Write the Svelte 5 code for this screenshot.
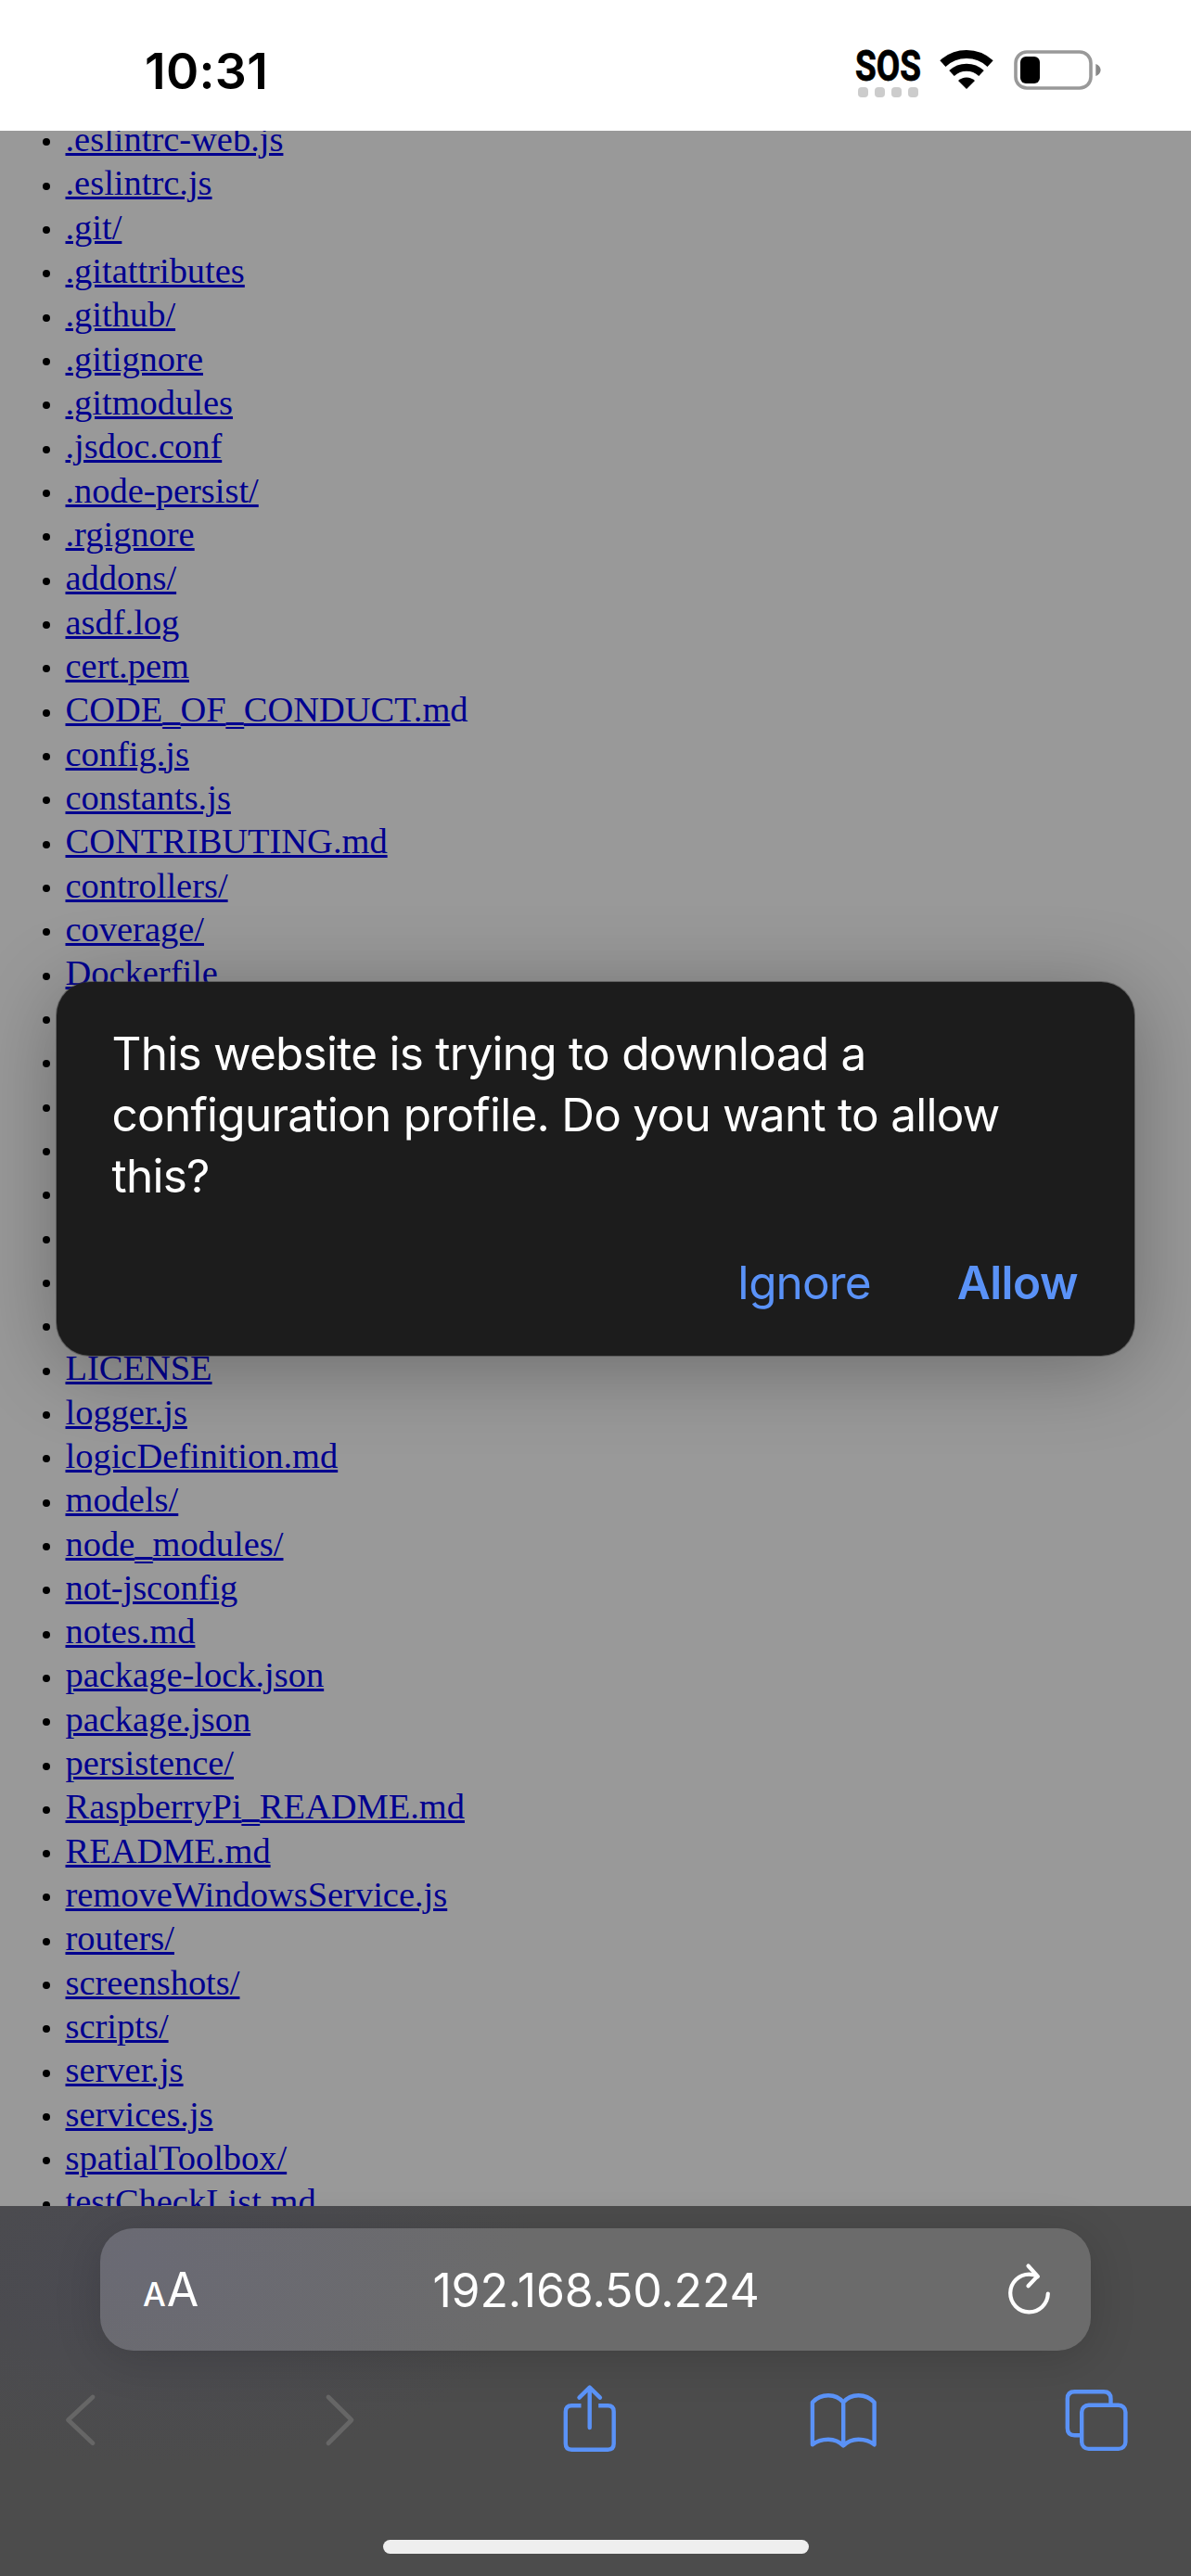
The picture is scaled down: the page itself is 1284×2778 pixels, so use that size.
<script>
  const files = [
    '.eslintrc-web.js', '.eslintrc.js', '.git/', '.gitattributes', '.github/', '.gitignore',
    '.gitmodules', '.jsdoc.conf', '.node-persist/', '.rgignore', 'addons/', 'asdf.log',
    'cert.pem', 'CODE_OF_CONDUCT.md', 'config.js', 'constants.js', 'CONTRIBUTING.md',
    'controllers/', 'coverage/', 'Dockerfile',
    // entries hidden behind the dialog
    '', '', '', '', '', '', '', '',
    'LICENSE', 'logger.js', 'logicDefinition.md', 'models/', 'node_modules/', 'not-jsconfig',
    'notes.md', 'package-lock.json', 'package.json', 'persistence/', 'RaspberryPi_README.md',
    'README.md', 'removeWindowsService.js', 'routers/', 'screenshots/', 'scripts/',
    'server.js', 'services.js', 'spatialToolbox/', 'testCheckList.md'
  ];
</script>

<div class="phone">
  <header class="status">
    <span class="time">10:31</span>
    <div class="indicators">
      <div class="carrier">
        <svg class="sos" viewBox="0 0 70 36"><text x="-1" y="34.5" textLength="71" lengthAdjust="spacingAndGlyphs">SOS</text></svg>
        <div class="dots"><i></i><i></i><i></i><i></i></div>
      </div>
      <svg class="wifi" viewBox="-30 -43 60 44">
        <path d="M-25.6 -27.4A37.5 37.5 0 0 1 25.6 -27.4" stroke-width="9" />
        <path d="M-16 -17A23.4 23.4 0 0 1 16 -17" stroke-width="8" />
        <path class="solid" d="M0 0L-9 -9A13 13 0 0 1 9 -9Z" />
      </svg>
      <svg class="battery" viewBox="0 0 96 44">
        <rect x="2" y="2" width="81" height="39" rx="12" fill="none" stroke="#999" stroke-width="3.6" />
        <rect x="7" y="7" width="21" height="29" rx="6" fill="#000" />
        <path d="M88.300 15C91.500 16 93.600 18.600 93.600 21.500S91.500 27 88.300 28Z" fill="#888" />
      </svg>
    </div>
  </header>

  <main class="page">
    <ul>
      {#each files as name}
        <li>
          {#if name === 'CODE_OF_CONDUCT.md'}
            <a href="#file">CODE<span class="low">_</span>OF<span class="low">_</span>CONDUCT.m<span class="tail">d</span></a>
          {:else if name}
            <a href="#file">{#each name.split('_') as part, i}{#if i}<span class="low">_</span>{/if}{part}{/each}</a>
          {/if}
        </li>
      {/each}
    </ul>
  </main>

  <footer class="toolbar">
    <div class="address">
      <span class="aa"><small>A</small><b>A</b></span>
      <span class="url">192.168.50.224</span>
      <svg class="reload" viewBox="0 0 50 58">
        <path d="M33.800 15.200C31 13.400 28 12.700 24.500 12.700A20.300 20.300 0 1 0 44.800 33.500" />
        <path d="M23.500 3.500L33.600 14.600L23.500 25.200" />
      </svg>
    </div>
    <nav>
      <svg class="off" viewBox="0 0 72 80"><path d="M49 15L22.500 39.800L49 64.700" /></svg>
      <svg class="off" viewBox="0 0 72 80"><path d="M30 15L55 39.800L30 64.700" /></svg>
      <svg viewBox="0 0 72 80">
        <path class="butt" d="M28.500 24.300H18.200Q11.800 24.300 11.800 30.700V65.300Q11.800 71.700 18.200 71.700H57.300Q63.700 71.700 63.700 65.300V30.700Q63.700 24.300 57.300 24.300H47.200" />
        <path d="M37.700 48V5.500M26.500 15.600L37.700 4.600L48.900 15.600" />
      </svg>
      <svg viewBox="0 0 72 80">
        <path d="M37.200 20.700C33 15.500 27.500 13.200 21 13.200C14 13.200 8.500 15.700 3.900 20.700V66.300C8.500 62.500 14 60.700 21 60.700C27.500 60.700 33 63 37.200 67.500C41.400 63 47 60.700 53.500 60.700C60.500 60.700 66 62.500 70.600 66.300V20.700C66 15.700 60.500 13.200 53.500 13.200C47 13.200 41.400 15.500 37.200 20.700V67" />
      </svg>
      <svg viewBox="0 0 72 80">
        <path class="butt" d="M20 56.200H12.500Q4.800 56.200 4.800 48.500V16.900Q4.800 9.200 12.500 9.200H43.800Q51.500 9.200 51.500 16.900V23" />
        <rect x="20.200" y="23.700" width="47.200" height="47.200" rx="7.500" />
      </svg>
    </nav>
    <div class="home"></div>
  </footer>

  <div class="dialog">
    <p>
      <span>This website is trying to download a</span>
      <span>configuration profile. Do you want to allow</span>
      <span>this?</span>
    </p>
    <div class="actions">
      <button class="ignore">Ignore</button>
      <button class="allow">Allow</button>
    </div>
  </div>
</div>

<style>
  :global(body) { margin: 0; background: #4c4c4c; }
  .phone {
    position: relative; width: 1284px; height: 2778px; overflow: hidden;
    display: flex; flex-direction: column; background: #999;
    font-family: Inter, 'Liberation Sans', sans-serif;
  }
  svg { display: block; overflow: visible; flex: none; }

  .status {
    height: 141px; flex: none; box-sizing: border-box; background: #fff; color: #000;
    display: flex; justify-content: space-between; align-items: flex-start;
    padding: 0 95px 0 156px;
  }
  .time { font-size: 53.5px; font-weight: 600; line-height: 64px; margin-top: 45px; letter-spacing: .3px; }
  .indicators { display: flex; align-items: flex-start; padding-top: 52px; }
  .carrier { width: 70px; }
  .sos { width: 70px; height: 36px; }
  .sos text { font: 700 47px Roboto, sans-serif; stroke: #000; stroke-width: .8px; }
  .dots { display: flex; gap: 7px; padding: 6px 0 0 2px; }
  .dots i { width: 11px; height: 11px; border-radius: 4px; background: #ccc; }
  .wifi { width: 60px; height: 44px; margin: 1px 0 0 19px; fill: none; stroke: #000; }
  .wifi .solid { fill: #000; stroke: none; }
  .battery { width: 96px; height: 44px; margin: 2px 0 0 21px; }

  .page { height: 2238px; flex: none; overflow: hidden; }
  ul { list-style: none; margin: -14px 0 0; padding: 0 0 0 45.500px; }
  li {
    display: flex; align-items: center; gap: 17px; height: 47.330px;
    font-family: 'Liberation Serif', serif; font-size: 38.460px; line-height: 47.330px; white-space: nowrap;
  }
  li::before {
    content: ''; width: 8px; height: 8px; border-radius: 50%; background: #000;
    margin-top: 5.400px; flex: none;
  }
  a { color: #00008f; text-decoration: underline; text-decoration-thickness: 2.500px; text-underline-offset: 1.500px; }
  .tail { display: inline-block; text-decoration: none; }
  /* underscores hang just below an unbroken underline */
  .low {
    display: inline-block; position: relative; top: 3px;
    text-decoration: underline; text-decoration-thickness: 2.500px;
    text-underline-offset: -1.500px; text-decoration-skip-ink: none;
  }

  .toolbar {
    height: 399px; flex: none; box-sizing: border-box; padding-top: 24px;
    background: radial-gradient(ellipse 420px 210px at 170px 70px, #4a4a52, rgba(76, 76, 76, 0)), #4c4c4c;
    display: flex; flex-direction: column; align-items: center;
  }
  .address {
    width: 1068px; height: 132px; box-sizing: border-box; flex: none; border-radius: 36px;
    background: radial-gradient(ellipse 420px 260px at 40px 30px, #6a6a74, #6b6b6b);
    box-shadow: 0 8px 50px rgba(0, 0, 0, .16);
    display: flex; align-items: center; justify-content: space-between;
    padding: 0 41px 0 46px; color: #fff;
  }
  .aa { display: flex; align-items: baseline; gap: 1px; width: 50px; line-height: 60px; padding-top: 5px; }
  .aa small { font-size: 35px; font-weight: 500; }
  .aa b { font-size: 50px; font-weight: 400; }
  .url { font-size: 50px; letter-spacing: -.15px; line-height: 60px; padding: 2px 4px 0 0; }
  .reload { width: 50px; height: 58px; fill: none; stroke: #fff; stroke-width: 4.200; stroke-linecap: round; stroke-linejoin: round; }
  nav {
    width: 1284px; box-sizing: border-box; padding: 0 66.500px 0 50.500px; margin-top: 35px;
    display: flex; justify-content: space-between;
  }
  nav svg { width: 72px; height: 80px; fill: none; stroke: #5a92f7; stroke-width: 4.400; stroke-linecap: round; stroke-linejoin: round; }
  nav svg.off { stroke: #666; stroke-width: 4.800; }
  nav .butt { stroke-linecap: butt; }
  .home { width: 459px; height: 15px; border-radius: 8px; background: #eee; margin-top: 89px; }

  .dialog {
    position: absolute; left: 61px; top: 1058.500px; width: 1162px; height: 403.500px;
    box-sizing: border-box; padding: 44.500px 61px 0 59.500px; border-radius: 36px;
    background: #1c1c1c; box-shadow: 0 0 0 1px rgba(60, 60, 60, .5), 0 12px 90px rgba(0, 0, 0, .3);
    color: #fff;
  }
  p { margin: 0; display: flex; flex-direction: column; align-items: flex-start; }
  p span { font-size: 49.500px; line-height: 66px; white-space: nowrap; letter-spacing: -.740px; }
  .actions { display: flex; justify-content: flex-end; gap: 93px; margin-top: 49px; }
  button {
    border: 0; padding: 0; background: none; color: #5a92f7; font-family: inherit;
    font-size: 49.500px; line-height: 66px; letter-spacing: -.5px;
  }
  .ignore { letter-spacing: -.900px; }
  .allow { font-weight: 600; }
</style>
